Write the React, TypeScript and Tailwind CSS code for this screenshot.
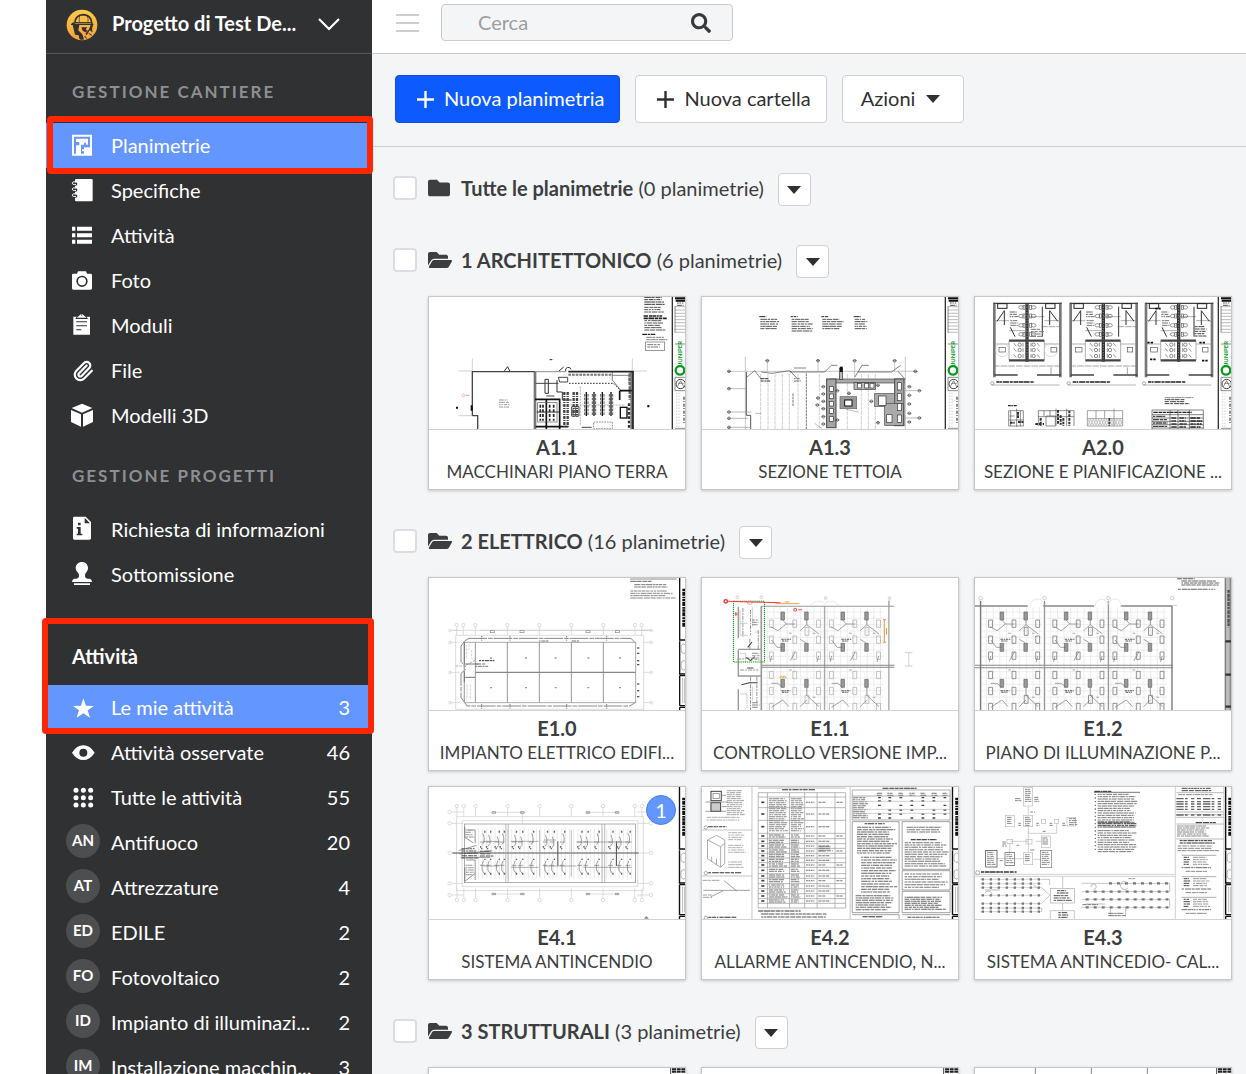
import type { ReactNode } from "react";
import { FaFolder, FaFolderOpen, FaSearch } from "react-icons/fa";
import { Paperclip } from "lucide-react";

/* ---------- path helpers for the sheet previews ---------- */

const range = (n: number) => Array.from({ length: n }, (_, i) => i);

// vertical and horizontal strokes
const vl = (xs: number[], y1: number, y2: number) => xs.map((x) => `M${x} ${y1}V${y2}`).join("");
const hl = (ys: number[], x1: number, x2: number) => ys.map((y) => `M${x1} ${y}H${x2}`).join("");

// rows of broken strokes, reads as tiny print
function words(x: number, y: number, w: number, rows: number, step: number) {
  let seed = Math.round(x * 31 + y * 17 + w) || 1;
  const rnd = () => {
    seed = (seed * 16807) % 2147483647;
    return seed / 2147483647;
  };
  let d = "";
  for (let r = 0; r < rows; r++) {
    let cx = x;
    const end = x + w * (0.75 + rnd() * 0.25);
    while (cx < end) {
      const len = Math.min(4 + rnd() * 16, end - cx);
      d += `M${cx.toFixed(1)} ${y + r * step}h${len.toFixed(1)}`;
      cx += len + 1 + rnd() * 2;
    }
  }
  return d;
}

const Print = ({ x, y, w, rows, step = 7, sw = 3, c = "#777" }: { x: number; y: number; w: number; rows: number; step?: number; sw?: number; c?: string }) => (
  <path d={words(x, y, w, rows, step)} stroke={c} strokeWidth={sw} />
);

function Sheet({ box, children }: { box: string; children: ReactNode }) {
  return (
    <svg viewBox={box} preserveAspectRatio="none" className="block w-full h-full" fill="none" stroke="#555" strokeWidth="2" aria-hidden="true">
      {children}
    </svg>
  );
}

// right-hand strip of the architectural sheets
const ArchStrip = ({ x = 0 }: { x?: number }) => (
  <g transform={`translate(${x} 0)`}>
    <path d="M742 21V417" stroke="#333" strokeWidth="4" />
    <path d="M750 25H780M752 32H780" stroke="#111" strokeWidth="6" />
    <Print x={756} y={39} w={24} rows={2} c="#555" />
    <path d={hl([50, 60, 70, 79, 89, 98, 108, 118, 127], 750, 780)} stroke="#999" />
    <path d="M750 48V128M750 162H780M750 262H780M750 302H780M750 262V302M750 415H780" stroke="#555" />
    <circle cx="765" cy="241" r="13" stroke="#0a9a1c" strokeWidth="7" />
    <text x="772" y="226" transform="rotate(-90 772 226)" fill="#0a9a1c" stroke="none" fontSize="18" fontWeight="700">JUNIPER</text>
    <circle cx="767" cy="282" r="14" stroke="#444" strokeWidth="3" />
    <path d="M757 290L767 272L777 292M760 280H776" stroke="#555" />
    <path d="M755 308V412M762 308V412" stroke="#999" strokeDasharray="3 6" />
    <path d="M777 320V400" stroke="#555" strokeWidth="4" strokeDasharray="9 4 3 5" />
  </g>
);

// right-hand strip of the electrical sheets, drawn over a 743 or 768 wide box
const ElecStrip = ({ x, y }: { x: number; y: number }) => (
  <g transform={`translate(${x} ${y})`} stroke="#111">
    <path d="M0 0V188M0 190V290M0 293V383M0 388V396" strokeWidth="4" />
    <path d="M0 186H20M0 288H20M0 293H20M0 383H20M0 388H20" strokeWidth="4" />
    <path d="M12 32V148" strokeWidth="8" strokeDasharray="7 2 12 3 5 2" />
    <ellipse cx="12" cy="212" rx="8" ry="14" stroke="#888" />
    <ellipse cx="12" cy="262" rx="8" ry="14" stroke="#888" />
    <path d="M9 300V376M15 300V376" stroke="#999" />
  </g>
);

function SheetA11() {
  return (
    <Sheet box="12 21 768 396">
      <Print x={658} y={22} w={66} rows={4} c="#333" />
      <Print x={658} y={52} w={62} rows={3} c="#555" />
      <Print x={656} y={78} w={70} rows={2} sw={5} c="#222" />
      <Print x={658} y={92} w={64} rows={5} c="#555" />
      <Print x={652} y={133} w={50} rows={1} sw={4} c="#222" />
      <Print x={664} y={142} w={66} rows={2} c="#777" />
      <rect x="662" y="156" width="56" height="26" stroke="#666" />
      <Print x={667} y={164} w={48} rows={2} c="#777" />
      <path d="M100 243H140M142 205V243M622 205V243M625 243H665M100 377H140" stroke="#bbb" />
      <path d="M142 377V245H330M142 377H158V417" stroke="#444" strokeWidth="4" />
      <path d="M330 245H424" stroke="#555" strokeWidth="2" />
      <path d="M330 245V417M620 245V417" stroke="#777" strokeWidth="8" />
      <path d="M430 245H624V417" stroke="#222" strokeWidth="5" />
      <path d="M430 254H560" stroke="#777" strokeWidth="6" strokeDasharray="8 3" />
      <path d="M432 280H566L590 305" stroke="#333" strokeDasharray="5 4" strokeWidth="3" />
      <path d="M562 246V270L588 302M562 256H612V280" stroke="#444" />
      <path d="M614 250V330" stroke="#666" strokeWidth="7" strokeDasharray="10 3" />
      <path d="M584 302H620M584 302V330M330 328H404V417M332 410H430M364 330V417" stroke="#111" strokeWidth="5" />
      <rect x="338" y="338" width="58" height="58" stroke="#555" />
      <path d="M346 344V392M354 344V392M374 344V392M386 344V392" strokeWidth="5" stroke="#222" strokeDasharray="9 5" />
      <path d="M335 366H402M360 268V310H370V268ZM396 270V306H412V330H440" stroke="#333" strokeWidth="3" />
      <path d="M332 280H400M400 262H428V276H404ZM364 318H388M440 350H462V378H440ZM444 358V374M452 352V378M470 412H500" stroke="#444" strokeWidth="3" />
      {[418, 428, 446, 456].map((x, i) => (
        <path key={x} d={`M${x} 306V${i > 1 ? 380 : 410}`} stroke="#444" strokeWidth="7" strokeDasharray="9 3 3 3" />
      ))}
      {[484, 507, 532, 558].map((x) => (
        <g key={x}>
          <path d={`M${x} 306V378`} stroke="#111" strokeWidth="4" />
          <path d={`M${x - 5} 312V376M${x + 5} 312V376`} stroke="#555" strokeWidth="3" strokeDasharray="8 3" />
        </g>
      ))}
      <path d="M466 290V408M410 345H600" stroke="#888" strokeDasharray="6 3" />
      <rect x="586" y="352" width="20" height="32" stroke="#111" strokeWidth="4" />
      <path d="M612 340V414" stroke="#333" strokeWidth="7" strokeDasharray="8 5" />
      <rect x="506" y="396" width="56" height="20" stroke="#555" strokeDasharray="5 3" />
      <path d="M238 243L248 230L254 243M402 243L416 231M422 243A8 8 0 1 1 438 238" stroke="#333" strokeWidth="3" />
      <Print x={222} y={330} w={34} rows={4} c="#999" />
      <Print x={374} y={209} w={14} rows={1} c="#222" />
      <path d="M140 346V362M96 350V356M670 345V352" stroke="#111" strokeWidth="6" />
      <circle cx="115" cy="316" r="4" stroke="#f39a9a" />
      <path d="M122 316H133" stroke="#f39a9a" strokeWidth="3" />
      <ArchStrip />
    </Sheet>
  );
}

function SheetA13() {
  return (
    <Sheet box="12 21 768 396">
      {[184, 278, 370, 467].map((x) => (
        <g key={x}>
          <Print x={x} y={80} w={28} rows={1} c="#222" />
          <Print x={x + 3} y={88} w={x > 460 ? 40 : 66} rows={x === 278 ? 6 : 5} c="#555" />
        </g>
      ))}
      <path d="M92 244H660M142 200V420M622 200V420M360 214V244M208 214V244M470 214V262M590 214V244" stroke="#aaa" />
      <path d={vl([188, 210, 231, 253, 274, 300, 364, 448, 490, 511, 532], 252, 417)} stroke="#bbb" strokeDasharray="12 2" />
      <path d="M325 250V417M285 310V350" stroke="#777" strokeDasharray="8 2" strokeWidth="3" />
      <path d="M145 246V376M145 376H158V417" stroke="#555" strokeWidth="3" />
      <path d="M146 262L170 242L190 268M190 246L222 250L275 242L300 268M275 246L380 246L400 226H418M288 234H324M470 262L492 226H512M480 246H580L608 226M600 244L622 268" stroke="#444" />
      <Print x={188} y={266} w={30} rows={2} c="#333" />
      <Print x={288} y={266} w={22} rows={2} c="#777" />
      <rect x="396" y="267" width="222" height="12" fill="#aaa" stroke="#444" />
      <rect x="386" y="267" width="28" height="146" fill="#a5a5a5" stroke="#444" strokeWidth="3" />
      <rect x="590" y="267" width="28" height="140" fill="#a5a5a5" stroke="#444" strokeWidth="3" />
      <rect x="468" y="278" width="64" height="20" fill="#bbb" stroke="#333" />
      <rect x="426" y="320" width="50" height="36" fill="#999" stroke="#666" />
      <rect x="530" y="310" width="60" height="40" fill="#aaa" stroke="#555" />
      <rect x="560" y="340" width="56" height="66" fill="#aaa" stroke="#444" />
      {[290, 312, 334, 356, 380].map((y) => (
        <rect key={y} x="394" y={y} width="12" height="14" fill="#fff" stroke="#333" />
      ))}
      {[278, 310, 340, 375].map((y) => (
        <rect key={y} x="598" y={y} width="12" height="22" fill="#fff" stroke="#333" />
      ))}
      {[478, 500, 516].map((x) => (
        <rect key={x} x={x} y="280" width="12" height="14" fill="#fff" stroke="#333" />
      ))}
      <rect x="440" y="330" width="22" height="18" fill="#fff" stroke="#111" strokeWidth="3" />
      <rect x="542" y="318" width="22" height="28" fill="#fff" stroke="#333" />
      <rect x="566" y="374" width="16" height="24" fill="#fff" stroke="#333" />
      <rect x="424" y="234" width="10" height="34" fill="#bbb" stroke="#333" />
      {[[93, 296], [93, 366], [93, 385], [93, 412], [93, 244], [652, 244], [208, 212], [360, 212], [470, 212], [590, 212], [376, 290], [376, 312], [376, 334], [376, 356], [376, 380], [376, 402], [634, 290], [634, 316], [634, 342], [634, 370], [634, 396], [664, 302], [664, 384], [540, 286], [520, 334], [540, 398], [453, 310], [360, 324], [358, 345], [418, 302], [418, 390]].map(([x, y]) => (
        <path key={`${x}-${y}`} d={`M${x - 4} ${y}a4 4 0 1 1 8 0a4 4 0 1 1 -8 0M${x - 6} ${y}h12`} stroke="#444" strokeWidth="2" />
      ))}
      <path d="M98 296H142M98 366H160M98 385H150M98 412H160M618 302H660M618 384H660M444 358L482 366M350 400L372 416M172 370H190" stroke="#999" />
      <path d="M430 230V246" stroke="#111" strokeWidth="8" />
      <ArchStrip />
    </Sheet>
  );
}

function WashroomPlan({ x, kind }: { x: number; kind: number }) {
  return (
    <g transform={`translate(${x} 0)`}>
      <path d="M0 38V262M198 38V262" stroke="#777" strokeWidth="8" />
      <path d="M-2 40H202M0 255H70M128 255H200" stroke="#444" strokeWidth="4" />
      <path d="M98 40V215" stroke="#333" strokeWidth="10" />
      <path d="M98 42V212" stroke="#888" strokeWidth="3" strokeDasharray="4 4" />
      <path d="M44 152H150M44 211H150" stroke="#444" strokeWidth="7" />
      <path d="M44 152V211M150 152V211M0 92H44M150 92H198M0 162H44M150 162H198M98 80H150M44 122H98" stroke="#888" />
      <rect x="10" y="41" width="28" height="14" stroke="#222" strokeWidth="3" />
      <rect x="154" y="41" width="28" height="14" stroke="#222" strokeWidth="3" />
      <path d="M8 94L30 62V105M190 94L166 62V105M48 112L62 140M144 50V140" stroke="#333" strokeWidth="3" />
      {[52, 78, 106, 133].map((y) => (
        <g key={y} stroke="#666">
          <ellipse cx="80" cy={y} rx="7" ry="5" />
          <rect x="86" y={y - 6} width="6" height="12" />
          <ellipse cx="118" cy={y} rx="7" ry="5" />
          <rect x="106" y={y - 6} width="6" height="12" />
        </g>
      ))}
      {[164, 180, 198].map((y) => (
        <g key={y} stroke="#555">
          <circle cx="76" cy={y} r="5" />
          <circle cx="118" cy={y} r="5" />
          <path d={`M86 ${y - 6}v12M110 ${y - 6}v12M128 ${y - 5}l8 10M58 ${y - 5}l8 10`} stroke="#666" />
        </g>
      ))}
      <rect x="14" y="172" width="20" height="14" stroke="#555" />
      <rect x="170" y="172" width="16" height="14" stroke="#555" />
      {kind === 0 && <path d="M4 180a20 20 0 1 1 40 0a20 20 0 1 1 -40 0M150 180a20 20 0 1 1 40 0a20 20 0 1 1 -40 0" stroke="#ccc" />}
      {kind === 0 && <Print x={110} y={118} w={40} rows={4} c="#777" />}
      {kind !== 2 && <path d="M-4 228H196M170 232V255M140 110H196" stroke="#777" strokeDasharray="20 3" />}
      {kind === 2 && <path d="M4 158H24M160 158H180M12 208H30M168 212H186M28 56H44" stroke="#111" strokeWidth="5" strokeDasharray="7 3" />}
      {kind === 2 && <Print x={146} y={110} w={38} rows={5} c="#444" />}
      <Print x={46} y={66} w={28} rows={3} c="#666" />
      <Print x={48} y={92} w={28} rows={3} c="#777" />
      <path d="M-8 285H196" stroke="#999" />
      <circle cx="-6" cy="280" r="5" stroke="#888" />
      <Print x={6} y={276} w={150} rows={1} sw={5} c="#222" />
    </g>
  );
}

function SheetA20() {
  return (
    <Sheet box="15 21 768 396">
      <WashroomPlan x={73} kind={0} />
      <WashroomPlan x={302} kind={1} />
      <WashroomPlan x={528} kind={2} />
      <Print x={114} y={347} w={34} rows={1} sw={4} c="#222" />
      <path d="M116 362H160V408H116ZM122 362V408M140 356V410M151 362V408M116 390H160M118 378H134" stroke="#555" />
      <path d="M120 398H134M144 366V386M144 396H160" stroke="#333" strokeWidth="6" strokeDasharray="8 2" />
      <path d="M205 362H312V408M205 362V408M222 362V378M240 362V378M258 356V408M290 356V408M228 378H256V408H228ZM204 380H312" stroke="#555" />
      <path d="M196 402H222M212 384V408M264 360V404M272 376V404M280 384V408M298 362V408" stroke="#333" strokeWidth="6" strokeDasharray="8 3" />
      <path d="M352 362H458V408H352ZM352 386H458M378 362V386M404 362V386M432 356V408" stroke="#777" />
      <path d={range(13).map((i) => `M${354 + i * 8} 388l8 18M${362 + i * 8} 388l-8 18`).join("")} stroke="#aaa" />
      <path d="M418 384V408" stroke="#333" strokeWidth="5" strokeDasharray="8 3" />
      <Print x={584} y={323} w={108} rows={1} c="#888" />
      <Print x={584} y={329} w={76} rows={3} step={6} c="#444" />
      <path d={hl([360, 374, 384, 394, 404, 414], 546, 700) + vl([546, 600, 624, 658, 700], 360, 417)} stroke="#444" />
      <Print x={550} y={367} w={146} rows={1} sw={4} c="#222" />
      <Print x={549} y={379} w={46} rows={4} step={10} sw={4} c="#444" />
      <Print x={604} y={384} w={18} rows={4} step={9} sw={4} c="#333" />
      <Print x={628} y={384} w={24} rows={4} step={9} sw={5} c="#333" />
      <Print x={661} y={384} w={36} rows={4} step={9} sw={5} c="#222" />
      <ArchStrip x={3} />
    </Sheet>
  );
}

function SheetE10() {
  return (
    <Sheet box="12 174 768 396">
      <path d="M615 177H755" stroke="#555" />
      <Print x={616} y={184} w={80} rows={1} c="#666" />
      <Print x={628} y={194} w={124} rows={2} c="#777" />
      <Print x={616} y={213} w={138} rows={4} c="#888" />
      <g stroke="#ccc">
        <path d={vl([95, 115, 151, 247, 343, 439, 535, 630, 650], 320, 345) + hl([331, 367, 457, 548], 76, 104) + hl([331, 367, 457, 548], 655, 680)} />
        {[95, 115, 151, 247, 343, 439, 535, 630, 650].map((x) => <circle key={x} cx={x} cy="315" r="5" />)}
        {[331, 367, 457, 548].map((y) => <path key={y} d={`M71 ${y}a4 4 0 1 1 8 0a4 4 0 1 1 -8 0M675 ${y}a4 4 0 1 1 8 0a4 4 0 1 1 -8 0`} />)}
        <path d="M92 346H656V568H92ZM80 331H676M247 367H343V380M165 331H676" />
      </g>
      <path d="M130 355H618L632 370M108 378L120 362L132 355M108 378V425L122 440M122 448L108 460V532L126 558H614L634 546" stroke="#888" strokeWidth="3" strokeDasharray="56 3 14 3" />
      <path d="M118 367H632V548H118ZM118 367V548" stroke="#aaa" strokeWidth="3" />
      <path d={vl([151, 247, 343, 439, 535], 367, 548)} stroke="#999" strokeWidth="3" />
      <path d="M151 457H632" stroke="#888" strokeWidth="4" />
      <path d="M118 367V430M118 454V486M118 472H151M118 432H160" stroke="#777" strokeWidth="3" />
      <path d="M124 374V414M132 374V390M140 390V416M126 494V540M136 494V540" stroke="#bbb" strokeDasharray="8 3" />
      <Print x={162} y={422} w={60} rows={1} c="#333" />
      <Print x={150} y={432} w={40} rows={2} c="#777" />
      <Print x={342} y={363} w={36} rows={1} c="#777" />
      <Print x={440} y={363} w={28} rows={1} c="#777" />
      {[170, 255, 425, 545].map((x) => <path key={x} d={`M${x} 348V362M${x} 552V566`} stroke="#777" strokeWidth="3" strokeDasharray="4 2" />)}
      {[195, 300, 389, 487, 582].map((x) => <path key={x} d={`M${x} 414h6M${x} 503h6`} stroke="#999" strokeWidth="4" />)}
      {[384, 400, 422, 434, 492, 512, 530].map((y) => <path key={y} d={`M636 ${y}h7`} stroke="#555" strokeWidth="4" />)}
      {[202, 291, 489, 577].map((x) => <rect key={x} x={x - 6} y="332" width="12" height="6" stroke="#888" />)}
      <path d="M92 438H118L152 420" stroke="#888" strokeDasharray="8 3" />
      <ElecStrip x={764} y={174} />
    </Sheet>
  );
}

// one lighting bay, both halves above and below the spine wall
function Bay({ x, dark }: { x: number; dark: boolean }) {
  const c = dark ? "#666" : "#aaa";
  return (
    <g transform={`translate(${x} 0)`}>
      <path d={vl(range(9).map((i) => 18 + i * 19), 112, 420) + hl([126, 145, 164, 183, 202, 221, 240, 259, 305, 324, 343, 362, 381, 400], 6, 178)} stroke="#e6e6e6" />
      {[150, 198, 246, 304, 352, 400].map((y) =>
        [30, 97, 165].map((fx) => (
          <path key={`${fx}-${y}`} d={`M${fx - 6} ${y}h11v22h-11z`} stroke={c} strokeWidth="2" />
        ))
      )}
      {[172, 376].map((y) => <path key={y} d={`M126 ${y}h11v24h-11z`} stroke={c} />)}
      {[126, 220, 328].map((y) => (
        <path key={y} d={`M57 ${y}h10v24h-10zM125 ${y}h10v24h-10z`} fill="#999" stroke="#666" />
      ))}
      <path d="M62 150L72 162L48 182L28 170M72 162H98M131 150V164L112 182M131 164L166 192M30 210L46 232H62M112 208L128 218M98 246L84 272M30 258L26 276M165 258L160 276M62 352L48 340H30M131 352V376M62 390L30 412M62 390L80 410M131 390L112 410M131 376L166 410" stroke="#777" strokeWidth="2" />
      <path d="M58 208H86M60 213H78M58 362H84M60 367H78" stroke="#555" strokeWidth="3" strokeDasharray="7 2 4 2" />
      <path d="M80 190H88M148 190H156M80 300H88M148 382H156" stroke="#aaa" strokeWidth="3" />
    </g>
  );
}

function SheetE11() {
  return (
    <Sheet box="11 24 733 396">
      <Bay x={180} dark={false} />
      <Bay x={352} dark={false} />
      <path d="M181 108V420M362 108V420M546 92V420" stroke="#aaa" strokeWidth="4" />
      <path d="M181 109H562" stroke="#999" strokeWidth="3" />
      <path d="M181 286H562M181 292H562" stroke="#888" strokeWidth="3" />
      <path d="M322 108a22 18 0 0 1 40 -6a22 18 0 0 1 40 6" stroke="#ddd" />
      <g stroke="#bbb">
        <circle cx="112" cy="82" r="4" /><circle cx="181" cy="82" r="4" /><circle cx="365" cy="84" r="4" /><circle cx="548" cy="84" r="4" />
        <path d="M592 248H614M592 288H614M603 248V288M548 88V106" />
      </g>
      <path d="M115 110V205M115 240V318H180M115 358V420M181 108V420M115 238H180" stroke="#999" strokeWidth="4" />
      <path d="M128 114V200M150 120V196M148 206V240M150 320V420M172 180V240M168 320V400M112 268L150 264L176 270M120 300H172" stroke="#999" strokeWidth="3" strokeDasharray="12 3 5 3" />
      <path d="M138 262L150 272L162 260M140 294H158M124 344L146 338H170M142 232L154 216" stroke="#444" strokeWidth="3" />
      <path d="M120 120V196H142M120 160H142M156 112V170M162 186H176M120 250H136V276M160 250H176M120 372H140V414M156 350V392" stroke="#bbb" />
      <Print x={154} y={150} w={22} rows={3} c="#888" />
      <Print x={154} y={250} w={22} rows={3} c="#999" />
      <Print x={154} y={398} w={22} rows={3} c="#888" />
      <rect x="101" y="94" width="89" height="182" stroke="#1a9b1a" strokeWidth="3" strokeDasharray="4 2" />
      <path d="M82 94L150 96L236 98" stroke="#f03a3a" strokeWidth="3" />
      <circle cx="79" cy="94" r="5" stroke="#e33" strokeWidth="4" />
      <ellipse cx="148" cy="98" rx="7" ry="5" stroke="#e77" />
      <circle cx="278" cy="119" r="4" stroke="#e55" strokeWidth="3" />
      <path d="M286 119H298M104 132H114M108 126V138" stroke="#e55" strokeWidth="3" />
      <path d="M222 101H290" stroke="#eda04a" strokeWidth="3" />
      <Print x={248} y={96} w={20} rows={1} c="#eda04a" />
      <path d="M533 148V217M529 149H538M529 217H538M539 174V194" stroke="#e8963a" strokeWidth="3" />
      <path d="M233 323H255M236 319H252" stroke="#e8963a" strokeWidth="3" strokeDasharray="5 2" />
    </Sheet>
  );
}

function SheetE12() {
  return (
    <Sheet box="793 24 733 396">
      <Print x={1372} y={26} w={60} rows={1} c="#555" />
      <Print x={1384} y={33} w={118} rows={3} step={6} c="#666" />
      <Print x={1374} y={58} w={128} rows={1} c="#666" />
      <Bay x={808} dark />
      <Bay x={992} dark />
      <Bay x={1164} dark />
      <path d="M793 108H944M988 108H1134M1210 108H1358" stroke="#888" strokeWidth="4" />
      <path d="M793 286H1358M793 293H1358" stroke="#888" strokeWidth="3" />
      <path d="M809 92V420M1357 108V420" stroke="#777" strokeWidth="4" />
      <path d="M992 92V420M1175 92V420" stroke="#999" strokeWidth="4" />
      <path d="M952 108a18 18 0 0 1 38 -4M1138 108a18 18 0 0 1 36 -4a18 18 0 0 1 38 4" stroke="#ddd" />
      <g stroke="#bbb">
        <circle cx="809" cy="84" r="5" /><circle cx="992" cy="84" r="5" /><circle cx="1175" cy="84" r="5" /><circle cx="1358" cy="84" r="5" />
        <path d="M1358 106H1372" />
      </g>
      <path d="M1516 24V420" stroke="#bbb" strokeWidth="17" />
      <path d="M1510 24V420M1524 24V420" stroke="#777" strokeWidth="3" />
      <path d="M1519 60V172" stroke="#555" strokeWidth="7" strokeDasharray="8 3 12 2" />
      <path d="M1510 214H1526M1510 314H1526M1510 410H1526" stroke="#333" strokeWidth="7" />
    </Sheet>
  );
}

function SheetE41() {
  const cols = [168, 185, 210, 225, 260, 278, 310, 350, 370, 400, 450, 468, 500, 540, 565, 590];
  return (
    <Sheet box="12 21 743 396">
      <g stroke="#ccc">
        {[93, 113, 147, 240, 333, 425, 517, 609, 630].map((x) => (
          <path key={x} d={`M${x - 5} 78a5 5 0 1 1 10 0a5 5 0 1 1 -10 0M${x - 5} 360a5 5 0 1 1 10 0a5 5 0 1 1 -10 0M${x} 84V110M${x} 325V354`} />
        ))}
        {[96, 130, 219, 310, 345].map((y) => (
          <path key={y} d={`M67 ${y}a5 5 0 1 1 10 0a5 5 0 1 1 -10 0M651 ${y}a5 5 0 1 1 10 0a5 5 0 1 1 -10 0M78 ${y}H112M615 ${y}H650`} />
        ))}
        <path d="M92 110H634V332H92ZM108 122H618V320H108ZM200 97H280M470 97H560M200 342H280M470 342H560M283 97V130" />
      </g>
      <path d={vl(range(38).map((i) => 156 + i * 12), 146, 296)} stroke="#e0e0e0" />
      <rect x="115" y="132" width="496" height="176" stroke="#888" strokeWidth="2" />
      <path d="M80 219H620" stroke="#555" strokeWidth="3" />
      <path d="M235 132V308M242 132V308M514 132V308M522 132V308M333 150V290M425 150V290" stroke="#999" strokeWidth="2" />
      <path d="M386 184V258M556 184V258" stroke="#555" strokeWidth="3" />
      <path d="M170 184H215M250 184H330M345 180H380M440 186H600M170 258H215M250 262H330M345 258H440M460 262H600" stroke="#888" />
      {cols.map((x, i) => (
        <g key={x} stroke="#777">
          <path d={`M${x} ${160 + (i % 3) * 5}l4 12v14l-6 8M${x + 2} 242l-4 12v16l6 10M${x - 8} 186h14M${x - 8} 256h14`} />
          <path d={`M${x + 6} 152v6M${x - 6} 198v5M${x + 6} 278v6M${x - 5} 206h4M${x + 4} 238h4`} strokeWidth="4" stroke="#666" />
        </g>
      ))}
      <path d="M98 212L150 196M100 222L196 212M104 232L190 232M116 140V172L140 188M116 262V304L146 280M124 150H146V190M120 240H146V300" stroke="#666" />
      <Print x={106} y={206} w={50} rows={5} c="#555" />
      <Print x={160} y={214} w={40} rows={3} c="#555" />
      <Print x={118} y={150} w={26} rows={4} c="#999" />
      <Print x={118} y={256} w={26} rows={5} c="#999" />
      {[200, 283, 473, 558].map((x) => <path key={x} d={`M${x - 5} 95h10v5h-10zM${x - 5} 340h10v4h-10z`} stroke="#777" />)}
      <path d="M636 416L643 408L650 416Z" fill="#888" stroke="none" />
      <ElecStrip x={739} y={21} />
    </Sheet>
  );
}

function SheetE42() {
  return (
    <Sheet box="804 21 743 396">
      <path d="M949 21V417M804 150H949M804 288H949M1234 21V417" stroke="#aaa" />
      <rect x="830" y="34" width="30" height="28" stroke="#444" strokeWidth="3" />
      <rect x="836" y="40" width="18" height="16" stroke="#777" />
      <rect x="830" y="68" width="28" height="26" fill="#ccc" stroke="#444" strokeWidth="3" />
      <path d="M814 66H880M814 94H874M862 46H874M862 80H876" stroke="#777" />
      <Print x={876} y={32} w={54} rows={13} step={6} sw={2} c="#777" />
      <Print x={818} y={112} w={118} rows={2} step={8} sw={2} c="#888" />
      <path d="M810 142a5 5 0 1 1 0 1M810 279a5 5 0 1 1 0 1M810 413a5 5 0 1 1 0 1" stroke="#777" />
      <Print x={822} y={140} w={66} rows={1} c="#333" />
      <Print x={822} y={278} w={120} rows={1} c="#333" />
      <Print x={822} y={412} w={100} rows={1} c="#333" />
      <path d="M820 180L846 166L870 180V250L858 262L820 236ZM820 180L858 200L870 190M858 200V262M832 230V246M846 236V254" stroke="#888" />
      <Print x={880} y={158} w={50} rows={4} sw={2} c="#888" />
      <Print x={880} y={196} w={54} rows={4} sw={2} c="#888" />
      <Print x={880} y={246} w={50} rows={3} step={8} sw={2} c="#888" />
      <path d="M808 331H943M868 302L905 333M830 350L866 332" stroke="#777" />
      <Print x={806} y={301} w={60} rows={1} sw={2} c="#777" />
      <Print x={806} y={345} w={34} rows={2} sw={2} c="#777" />

      <path d={hl([24, 38, 51, 83, 121, 160, 176, 191, 205, 220, 234, 248, 262, 281, 295, 311, 326, 341, 356, 370, 384], 967, 1221) + vl([967, 994, 1058, 1102, 1138, 1190, 1221], 38, 384)} stroke="#999" />
      <Print x={1036} y={29} w={118} rows={1} c="#333" />
      <Print x={998} y={56} w={58} rows={17} step={6} c="#888" />
      <Print x={1062} y={56} w={38} rows={17} step={6} c="#888" />
      {[67, 102, 140, 168, 184, 198, 213, 227, 241, 255, 271, 288, 302, 318, 333, 348, 363].map((y, i) => (
        <g key={y}>
          <path d={`M976 ${y}h9`} stroke="#444" strokeWidth="5" />
          {i > 2 && <Print x={998} y={y - 3} w={54} rows={2} step={6} c="#777" />}
          <path d={`M1106 ${y}h24`} stroke="#666" strokeDasharray="5 2" strokeWidth="3" />
          {i > 2 && <Print x={1062} y={y - 3} w={28} rows={2} step={6} c="#777" />}
          <path d={i % 3 ? `M1142 ${y}h34` : `M1142 ${y}h20M1194 ${y}h18`} stroke="#777" strokeWidth="3" strokeDasharray="9 2" />
        </g>
      ))}
      <Print x={1142} y={200} w={44} rows={3} step={6} c="#777" />
      <Print x={967} y={393} w={150} rows={1} c="#333" />
      <Print x={976} y={402} w={230} rows={2} step={9} c="#555" />

      <path d={hl([30, 48, 120], 1240, 1524) + vl([1240, 1524], 30, 120)} stroke="#888" />
      <Print x={1328} y={25} w={120} rows={1} c="#333" />
      {[1312, 1342, 1374, 1406, 1438, 1470, 1502].map((x, i) => (
        <g key={x}>
          <Print x={x} y={40} w={18} rows={2} step={6} c="#777" />
          <path d={[53, 63, 76, 90, 102, 114].filter((_, j) => (i + j) % 4 !== 3).map((y) => `M${x + 3} ${y}h8`).join("")} stroke="#444" strokeWidth="4" />
        </g>
      ))}
      <Print x={1242} y={53} w={44} rows={11} step={6} c="#777" />
      <path d={hl([64, 88, 100], 1240, 1524)} stroke="#bbb" />
      <path d="M1240 125H1376V398H1240ZM1385 125H1524V268H1385ZM1385 272H1524V330H1385ZM1385 334H1524V398H1385ZM1240 404H1376V417M1385 404H1524" stroke="#777" />
      <Print x={1276} y={131} w={70} rows={1} c="#333" />
      <Print x={1254} y={142} w={118} rows={12} step={7} c="#666" />
      <Print x={1266} y={232} w={106} rows={14} step={8} c="#666" />
      <Print x={1250} y={347} w={120} rows={7} step={7} c="#666" />
      <Print x={1398} y={142} w={120} rows={3} c="#777" />
      <Print x={1410} y={179} w={90} rows={1} sw={4} c="#444" />
      <Print x={1392} y={188} w={128} rows={11} c="#777" />
      <Print x={1392} y={282} w={128} rows={6} step={8} c="#777" />
      <Print x={1392} y={352} w={128} rows={7} step={6} c="#666" />
      <Print x={1270} y={410} w={70} rows={1} c="#333" />
      <Print x={1400} y={412} w={110} rows={1} c="#555" />
      <ElecStrip x={1531} y={21} />
    </Sheet>
  );
}

function SheetE43() {
  return (
    <Sheet box="30 21 768 396">
      <g stroke="#bbb">
        <path d="M190 80V104M190 140V160H275V130M190 152V218M134 190V222M212 184H230M150 236H176M204 238H228M96 236H120M134 184H190" />
        <rect x="176" y="22" width="26" height="56" /><rect x="121" y="106" width="27" height="34" /><rect x="176" y="106" width="27" height="34" />
        <rect x="229" y="118" width="13" height="12" /><rect x="268" y="118" width="13" height="12" /><rect x="306" y="112" width="26" height="26" />
        <rect x="126" y="178" width="17" height="13" /><rect x="183" y="178" width="18" height="14" /><rect x="229" y="168" width="27" height="34" />
        <rect x="176" y="218" width="27" height="36" />
      </g>
      <rect x="62" y="211" width="34" height="50" stroke="#333" />
      <rect x="120" y="218" width="29" height="38" stroke="#555" />
      <rect x="226" y="211" width="34" height="52" stroke="#777" />
      {[[180, 28, 20, 7], [150, 56, 22, 2], [208, 52, 16, 3], [126, 112, 18, 4], [180, 112, 18, 5], [312, 116, 28, 4], [196, 96, 18, 1], [233, 154, 14, 1], [232, 174, 20, 4], [112, 186, 14, 3], [155, 196, 14, 1], [66, 217, 26, 7], [124, 224, 22, 5], [180, 224, 18, 4], [230, 217, 26, 7], [104, 242, 12, 1], [196, 210, 16, 1], [160, 130, 10, 2], [214, 130, 10, 2], [254, 130, 10, 2], [292, 130, 10, 2]].map(([x, y, w, r]) => (
        <Print key={`${x}-${y}`} x={x} y={y} w={w} rows={r} step={6} c="#888" />
      ))}
      <path d="M387 37H525" stroke="#333" />
      <Print x={388} y={34} w={66} rows={1} c="#222" />
      <Print x={398} y={43} w={122} rows={13} step={7} c="#777" />
      <Print x={398} y={126} w={124} rows={4} step={5} c="#444" />
      <Print x={398} y={152} w={122} rows={10} step={7} c="#777" />
      {range(16).map((i) => <path key={i} d={`M389 ${43 + i * 11}h4`} stroke="#777" strokeWidth="4" />)}

      <circle cx="38" cy="278" r="6" stroke="#888" />
      <Print x={48} y={276} w={140} rows={1} sw={4} c="#333" />
      <path d="M30 283H630M30 289H630M631 21V417" stroke="#bbb" />

      <path d={hl([298, 311, 323, 346, 371, 384, 395], 46, 230)} stroke="#bbb" />
      <path d="M230 298H254V315M230 323L254 346L230 371M230 395V384" stroke="#aaa" />
      {[298, 311, 323, 346, 371, 384, 395].map((y) => (
        <path key={y} d={`M50 ${y}H226`} stroke="#777" strokeWidth="7" strokeDasharray="7 17" />
      ))}
      <path d="M60 340a10 10 0 1 1 20 8M60 330L104 330M206 316L222 328" stroke="#999" />
      <rect x="256" y="325" width="72" height="44" stroke="#aaa" />
      <Print x={276} y={332} w={34} rows={2} c="#444" />
      <Print x={266} y={347} w={56} rows={3} c="#555" />
      <path d="M293 290V325M293 369V392M256 417V392H328V417" stroke="#aaa" />
      <Print x={280} y={398} w={34} rows={3} c="#444" />
      <path d={hl([310, 335], 350, 614) + hl([358, 382], 350, 614) + "M614 310V335M614 358V382"} stroke="#aaa" />
      {[310, 335, 358, 382].map((y, i) => (
        <path key={y} d={`M${i === 0 ? 432 : 362} ${y}H610`} stroke="#777" strokeWidth="7" strokeDasharray="9 15" />
      ))}
      <path d="M378 322a8 8 0 1 1 8 6M484 306a12 12 0 1 0 4 18M436 384V408M482 384V410M362 372H420" stroke="#999" />
      <Print x={430} y={400} w={60} rows={2} c="#777" />
      <Print x={352} y={374} w={60} rows={1} c="#777" />
      <Print x={490} y={296} w={26} rows={1} c="#999" />

      <path d={vl([777], 21, 417) + hl([38, 96, 104, 112, 132, 177], 634, 776)} stroke="#999" />
      <Print x={650} y={25} w={110} rows={2} c="#444" />
      <path d={hl([56, 65, 72, 80, 88, 105], 634, 776)} stroke="#666" strokeWidth="4" strokeDasharray="22 4 8 10 10 8 12 6" />
      <Print x={640} y={44} w={132} rows={1} c="#888" />
      <Print x={692} y={128} w={76} rows={1} c="#222" />
      <Print x={636} y={138} w={110} rows={6} step={6} c="#888" />
      <Print x={644} y={182} w={124} rows={2} c="#333" />
      <Print x={638} y={198} w={130} rows={3} c="#888" />
      {[226, 290, 352].map((y) => (
        <g key={y}>
          <path d={`M650 ${y}H754`} stroke="#888" />
          <Print x={656} y={y + 6} w={20} rows={4} c="#444" />
          <Print x={684} y={y + 6} w={52} rows={4} c="#999" />
          <Print x={650} y={y + 37} w={110} rows={1} c="#666" />
          <Print x={662} y={y + 48} w={80} rows={1} c="#888" />
        </g>
      ))}
      <ElecStrip x={782} y={21} />
    </Sheet>
  );
}

function SheetBlank({ grid }: { grid?: boolean }) {
  return (
    <Sheet box="30 864 768 396">
      {grid && <path d={vl([211, 379, 547], 864, 1260)} stroke="#888" strokeWidth="3" />}
      <path d="M755 864V1260" stroke="#444" strokeWidth="3" />
      <path d="M759 868H798M759 875H798" stroke="#222" strokeWidth="6" strokeDasharray="12 2" />
    </Sheet>
  );
}

/* ---------- sidebar icons ---------- */

const NavIcon = ({ box, children }: { box: string; children: ReactNode }) => (
  <svg viewBox={box} width="34" height="34" fill="#fff" aria-hidden="true" className="shrink-0">{children}</svg>
);

const icons: Record<string, ReactNode> = {
  plan: (
    <NavIcon box="78 385 102 102">
      <path fillRule="evenodd" d="M96 402H156V465H96ZM102 408V459H150V408Z" />
      <path d="M108 414H144V432H138V426H132V432H123V460H108V434H118V424H108ZM132 440H151V460H132V452H126V446H132Z" />
    </NavIcon>
  ),
  book: (
    <NavIcon box="78 520 102 102">
      <path d="M109 535H155Q158 535 158 539V599Q158 602 155 602H109Q105 602 105 598V539Q105 535 109 535Z" />
      {[549, 567, 585].map((y) => (
        <g key={y}>
          <circle cx="107" cy={y + 1} r="5" fill="#303133" />
          <path d={`M108 ${y + 2}Q96 ${y + 4} 97 ${y - 2}Q98 ${y - 8} 107 ${y - 5}`} fill="none" stroke="#fff" strokeWidth="3" />
        </g>
      ))}
    </NavIcon>
  ),
  list: (
    <NavIcon box="78 25 102 102">
      <path d="M96 48H106V60H96ZM111 48H156V60H111ZM96 68H106V80H96ZM111 68H156V80H111ZM96 87H106V99H96ZM111 87H156V99H111Z" />
    </NavIcon>
  ),
  camera: (
    <NavIcon box="78 160 102 102">
      <path fillRule="evenodd" d="M100 189H111L114 182H138L141 189H152Q156 189 156 193V233Q156 237 152 237H100Q96 237 96 233V193Q96 189 100 189ZM126 195A17 17 0 1 0 126 229A17 17 0 1 0 126 195ZM126 200A12 12 0 1 1 126 224A12 12 0 1 1 126 200Z" />
    </NavIcon>
  ),
  clipboard: (
    <NavIcon box="78 295 102 102">
      <path fillRule="evenodd" d="M100 318H110L106 325H144L140 318H150V372H100ZM109 332V335H141V332ZM109 344V347H141V344ZM109 356V359H124V356Z" />
      <path d="M110 321L120 313A6 6 0 0 1 130 313L140 321Z" />
      <circle cx="125" cy="313" r="2" fill="#303133" />
    </NavIcon>
  ),
  clip: (
    <span className="w-[34px] flex justify-center shrink-0">
      <Paperclip size={22} strokeWidth={2.4} color="#fff" aria-hidden="true" />
    </span>
  ),
  cube: (
    <NavIcon box="78 565 102 102">
      <path d="M126 579L157 592L126 606L95 592ZM93 598L123 611V648L93 634ZM159 598L129 611V648L159 634Z" />
    </NavIcon>
  ),
  info: (
    <NavIcon box="78 220 102 102">
      <path fillRule="evenodd" d="M103 231H137L153 247V296Q153 300 149 300H103Q99 300 99 296V235Q99 231 103 231ZM134 234V251H150ZM114 249V257H122V249ZM110 262V267H114V282H110V287H127V282H122V262Z" />
    </NavIcon>
  ),
  stamp: (
    <NavIcon box="78 354 102 102">
      <path d="M126 366C137 366 144 374 144 384C144 395 135 398 135 406C135 413 137 415 143 416H150Q156 418 156 426H96Q96 418 102 416H109C115 415 117 413 117 406C117 398 107 395 107 384C107 374 115 366 126 366ZM102 430H150V435H102Z" />
    </NavIcon>
  ),
  star: (
    <NavIcon box="78 751 102 102">
      <path d="M130 773L138 795L162 796L143 809L150 831L130 818L110 831L117 809L99 796L123 795Z" />
    </NavIcon>
  ),
  eye: (
    <NavIcon box="78 886 102 102">
      <path fillRule="evenodd" d="M96 936Q110 914 130 914Q150 914 164 936Q150 958 130 958Q110 958 96 936ZM130 924A12 12 0 1 0 130 948A12 12 0 1 0 130 924Z" />
    </NavIcon>
  ),
  grid: (
    <NavIcon box="78 121 102 102">
      {[149, 171, 193].map((y) => [108, 130, 152].map((x) => <circle key={`${x}-${y}`} cx={x} cy={y} r="7.5" />))}
    </NavIcon>
  ),
};

/* ---------- data ---------- */

const siteNav = [
  { icon: "plan", label: "Planimetrie", active: true },
  { icon: "book", label: "Specifiche" },
  { icon: "list", label: "Attività" },
  { icon: "camera", label: "Foto" },
  { icon: "clipboard", label: "Moduli" },
  { icon: "clip", label: "File" },
  { icon: "cube", label: "Modelli 3D" },
];

const projectNav = [
  { icon: "info", label: "Richiesta di informazioni" },
  { icon: "stamp", label: "Sottomissione" },
];

const taskNav = [
  { icon: "eye", label: "Attività osservate", count: 46 },
  { icon: "grid", label: "Tutte le attività", count: 55 },
  { badge: "AN", label: "Antifuoco", count: 20 },
  { badge: "AT", label: "Attrezzature", count: 4 },
  { badge: "ED", label: "EDILE", count: 2 },
  { badge: "FO", label: "Fotovoltaico", count: 2 },
  { badge: "ID", label: "Impianto di illuminazi...", count: 2 },
  { badge: "IM", label: "Installazione macchin...", count: 3 },
];

type SheetCard = { code?: string; name?: string; art: ReactNode; alerts?: number };

const folders: { title: string; count: number; sheets: SheetCard[] }[] = [
  { title: "Tutte le planimetrie", count: 0, sheets: [] },
  {
    title: "1 ARCHITETTONICO",
    count: 6,
    sheets: [
      { code: "A1.1", name: "MACCHINARI PIANO TERRA", art: <SheetA11 /> },
      { code: "A1.3", name: "SEZIONE TETTOIA", art: <SheetA13 /> },
      { code: "A2.0", name: "SEZIONE E PIANIFICAZIONE ...", art: <SheetA20 /> },
    ],
  },
  {
    title: "2 ELETTRICO",
    count: 16,
    sheets: [
      { code: "E1.0", name: "IMPIANTO ELETTRICO EDIFI...", art: <SheetE10 /> },
      { code: "E1.1", name: "CONTROLLO VERSIONE IMP...", art: <SheetE11 /> },
      { code: "E1.2", name: "PIANO DI ILLUMINAZIONE P...", art: <SheetE12 /> },
      { code: "E4.1", name: "SISTEMA ANTINCENDIO", art: <SheetE41 />, alerts: 1 },
      { code: "E4.2", name: "ALLARME ANTINCENDIO, N...", art: <SheetE42 /> },
      { code: "E4.3", name: "SISTEMA ANTINCEDIO- CAL...", art: <SheetE43 /> },
    ],
  },
  { title: "3 STRUTTURALI", count: 3, sheets: [{ art: <SheetBlank /> }, { art: <SheetBlank /> }, { art: <SheetBlank grid /> }] },
];

/* ---------- pieces ---------- */

const Caret = () => (
  <svg width="14" height="8" viewBox="0 0 14 8" fill="#2f3033" aria-hidden="true"><path d="M0 0H14L7 8Z" /></svg>
);

const Plus = () => (
  <svg width="17" height="17" viewBox="0 0 17 17" stroke="currentColor" strokeWidth="2.4" aria-hidden="true"><path d="M8.5 0V17M0 8.5H17" /></svg>
);

function NavRow({ icon, badge, label, count, active }: { icon?: string; badge?: string; label: string; count?: number; active?: boolean }) {
  return (
    <a href="#" className={`flex items-center h-[45px] pl-5 pr-[22px] text-white ${active ? "bg-[#6496ff]" : ""}`}>
      {icon ? icons[icon] : (
        <span className="w-[34px] h-[34px] mb-1 shrink-0 rounded-full bg-[#4d4e50] flex items-center justify-center text-[15px] font-bold leading-none">{badge}</span>
      )}
      <span className="ml-[11px] flex-1 min-w-0 pb-0.5 whitespace-nowrap">{label}</span>
      {count !== undefined && <span className="pb-0.5">{count}</span>}
    </a>
  );
}

const NavHeading = ({ children }: { children: ReactNode }) => (
  <h2 className="flex items-center h-[69px] pt-1.5 pl-[26px] text-[17px] font-bold tracking-[2px] text-[#8e8f92]">{children}</h2>
);

function Card({ code, name, art, alerts }: SheetCard) {
  return (
    <a href="#" className="relative block h-[194px] bg-white border border-[#c6c7c9] shadow-[0_1px_3px_rgba(0,0,0,0.2)] text-center">
      <div className="h-[133px] border-b border-[#d2d2d2]">{art}</div>
      {code && (
        <div className="px-1 pt-[5px]">
          <div className="text-xl leading-6 font-bold">{code}</div>
          <div className="text-[17px] leading-[26px] truncate">{name}</div>
        </div>
      )}
      {alerts && (
        <span className="absolute top-2 right-[9px] w-[30px] h-[30px] rounded-full bg-[#6496ff] border border-[#3f7dff] text-white text-xl leading-none flex items-center justify-center">{alerts}</span>
      )}
    </a>
  );
}

function Logo() {
  return (
    <svg width="32" height="32" viewBox="78 27 96 96" className="shrink-0" aria-hidden="true">
      <defs>
        <linearGradient id="helmet" gradientUnits="userSpaceOnUse" x1="0" y1="29" x2="0" y2="121">
          <stop offset="0" stopColor="#fdc94a" />
          <stop offset="1" stopColor="#f5a13d" />
        </linearGradient>
      </defs>
      <circle cx="126" cy="75" r="46" fill="url(#helmet)" />
      {/* helmet outline and brim */}
      <path d="M105 68Q106 45 130 44Q153 46 155 68" fill="none" stroke="#303133" strokeWidth="5" />
      <path d="M119 46Q117 56 118 66M142 47Q145 56 144 66" fill="none" stroke="#303133" strokeWidth="2" />
      <path d="M93 72Q98 65 108 66H156L161 75H93Z" fill="#303133" />
      <path d="M104 70H154" stroke="#f9b644" strokeWidth="2" />
      {/* head in profile */}
      <path d="M98 75H118L115 91L127 103L132 118Q124 122 118 116L116 106L105 104Z" fill="#303133" />
      <path d="M124 82H142L137 88L143 93L136 97L128 92Z" fill="#303133" />
      <path d="M152 75H159L156 88L158 97L149 91L140 106L136 101L147 88Z" fill="#303133" />
      <path d="M134 108L140 116M146 100L156 106" stroke="#303133" strokeWidth="3" />
    </svg>
  );
}

export default function App() {
  return (
    <div className="flex h-screen overflow-hidden bg-white pl-[46px] font-['Lato',sans-serif] text-xl leading-6 text-[#3d3e40]">
      <nav className="w-[326px] shrink-0 bg-[#303133] text-white">
        <button type="button" className="flex items-center w-full h-[54px] pb-1 pl-5 pr-8 border-b border-[#58595c] text-left">
          <Logo />
          <span className="ml-3.5 pb-1 font-bold whitespace-nowrap">Progetto di Test De...</span>
          <svg width="22" height="13" viewBox="0 0 22 13" className="ml-auto" fill="none" stroke="#fff" strokeWidth="2.2" aria-hidden="true"><path d="M1 1L11 11L21 1" /></svg>
        </button>

        <NavHeading>GESTIONE CANTIERE</NavHeading>
        <div className="relative">
          <NavRow {...siteNav[0]} />
          <span className="absolute -top-[7px] -bottom-[6px] left-px -right-px border-[6px] border-[#ff2600] rounded-sm pointer-events-none" />
        </div>
        {siteNav.slice(1).map((item) => <NavRow key={item.label} {...item} />)}

        <NavHeading>GESTIONE PROGETTI</NavHeading>
        {projectNav.map((item) => <NavRow key={item.label} {...item} />)}

        <div className="relative">
          <h2 className="h-[88px] pt-[47px] pl-[26px] font-bold">Attività</h2>
          <NavRow icon="star" label="Le mie attività" count={3} active />
          <span className="absolute top-[21px] -bottom-[4px] -left-1 -right-0.5 border-[6px] border-[#ff2600] rounded-sm pointer-events-none" />
        </div>
        {taskNav.map((item) => <NavRow key={item.label} {...item} />)}
      </nav>

      <main className="flex-1 min-w-0 bg-[#f4f5f7] overflow-hidden">
        <header className="flex items-start h-[54px] pt-1 pl-6 bg-white border-b border-[#c9cacc]">
          <button type="button" aria-label="Menu" className="mt-2.5 flex flex-col gap-1.5">
            <span className="w-[23px] h-0.5 bg-[#cfcfcf]" />
            <span className="w-[23px] h-0.5 bg-[#cfcfcf]" />
            <span className="w-[23px] h-0.5 bg-[#cfcfcf]" />
          </button>
          <form className="ml-[22px] flex items-center w-[292px] h-[37px] pl-9 pr-[21px] bg-[#f4f5f7] border border-[#c9cacc] rounded">
            <input type="text" aria-label="Cerca" placeholder="Cerca" className="flex-1 min-w-0 pb-0.5 bg-transparent outline-none placeholder:text-[#9d9ea0]" />
            <button type="button" aria-label="Avvia ricerca"><FaSearch size={20} color="#3a3a3a" /></button>
          </form>
        </header>

        <div className="flex gap-[15px] pt-[21px] pb-[23px] pl-[23px] border-b border-[#cfd0d3]">
          <button type="button" className="flex items-center gap-2.5 h-12 pl-[21px] pr-[15px] rounded bg-[#0d5bff] border border-[#0a4fe0] text-white"><Plus /><span className="pb-0.5">Nuova planimetria</span></button>
          <button type="button" className="flex items-center gap-2.5 h-12 pl-[21px] pr-[15px] rounded bg-white border border-[#cfd0d3] text-[#2f3033]"><Plus /><span className="pb-0.5">Nuova cartella</span></button>
          <button type="button" className="flex items-center gap-[11px] h-12 pl-[18px] pr-[23px] rounded bg-white border border-[#cfd0d3] text-[#2f3033]"><span className="pb-0.5">Azioni</span><Caret /></button>
        </div>

        <div className="flex flex-col gap-9 pt-[26px] pl-[21px]">
          {folders.map(({ title, count, sheets }) => (
            <section key={title} className="min-h-9">
              <div className="flex items-center h-[33px]">
                <input type="checkbox" aria-label={title} className="appearance-none w-6 h-6 mb-1 bg-white border-2 border-[#dcdde0] rounded" />
                <span className="ml-[11px] w-6 mb-1">{sheets.length ? <FaFolderOpen size={24} /> : <FaFolder size={22} />}</span>
                <h3 className="ml-[9px] pb-1"><b>{title}</b> ({count} planimetrie)</h3>
                <button type="button" aria-label={`Opzioni ${title}`} className="ml-3.5 w-[33px] h-[33px] flex items-center justify-center bg-white border border-[#cfd0d3] rounded"><Caret /></button>
              </div>
              {sheets.length > 0 && (
                <div className="grid grid-cols-[repeat(auto-fill,258px)] gap-[15px] pt-[18px] pl-[35px]">
                  {sheets.map((sheet, i) => <Card key={i} {...sheet} />)}
                </div>
              )}
            </section>
          ))}
        </div>
      </main>
    </div>
  );
}
